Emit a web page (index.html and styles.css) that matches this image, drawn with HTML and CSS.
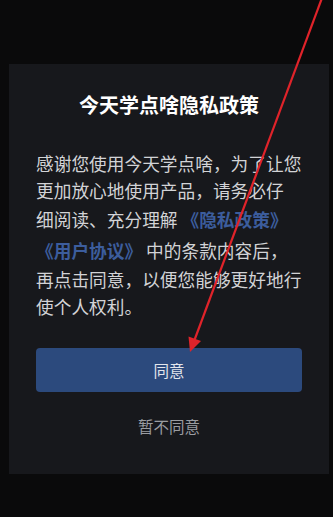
FILE: index.html
```html
<!DOCTYPE html>
<html lang="zh">
<head>
<meta charset="utf-8">
<link rel="stylesheet" href="styles.css">
</head>
<body>
<div class="screen">
  <div class="dialog">
    <h1 class="title">今天学点啥隐私政策</h1>
    <p class="body">感谢您使用今天学点啥，为了让您<br>更加放心地使用产品，请务必仔<br><span class="lline">细阅读、充分理解 <a class="link">《隐私政策》</a></span><br><span class="lline"><a class="link">《用户协议》</a> 中的条款内容后，</span><br>再点击同意，以便您能够更好地行<br>使个人权利。</p>
    <button class="agree">同意</button>
    <div class="decline">暂不同意</div>
  </div>
  <svg class="arrow" width="333" height="517" viewBox="0 0 333 517">
    <line x1="322" y1="-2" x2="193" y2="344" stroke="#e0232a" stroke-width="2.2"/>
    <polygon points="190,352 201,341 188.5,336.5" fill="#e0232a"/>
  </svg>
</div>
</body>
</html>
```
FILE: styles.css
```css
html, body {
  margin: 0;
  padding: 0;
  background: #0a0a0b;
}
body {
  font-family: "Noto Sans CJK SC", "Noto Sans", sans-serif;
  width: 333px;
  height: 517px;
  overflow: hidden;
}
.screen {
  position: relative;
  width: 333px;
  height: 517px;
  padding-top: 64px;
  box-sizing: border-box;
}
.dialog {
  margin-left: 9px;
  width: 320px;
  background: #17181c;
  padding: 27px 27px 37px;
  box-sizing: border-box;
  display: flex;
  flex-direction: column;
}
.title {
  margin: 0;
  font-size: 20px;
  line-height: 28px;
  font-weight: 700;
  color: #ffffff;
  text-align: center;
}
.body {
  margin: 31px 0 0;
  font-size: 17.7px;
  line-height: 27px;
  color: #d2d3d6;
  white-space: nowrap;
}
.lline {
  display: inline-block;
  line-height: 31px;
  vertical-align: top;
}
.link {
  color: #3c5d9d;
  font-weight: 700;
}
.agree {
  margin-top: 28px;
  height: 44px;
  border: none;
  border-radius: 4px;
  background: #2c4a7d;
  color: #e3e6ec;
  font-family: inherit;
  font-size: 15.5px;
  padding: 0;
}
.decline {
  margin-top: 23px;
  text-align: center;
  font-size: 15.5px;
  line-height: 22px;
  color: #9a9ca1;
}
.arrow {
  position: absolute;
  left: 0;
  top: 0;
  pointer-events: none;
}
```
